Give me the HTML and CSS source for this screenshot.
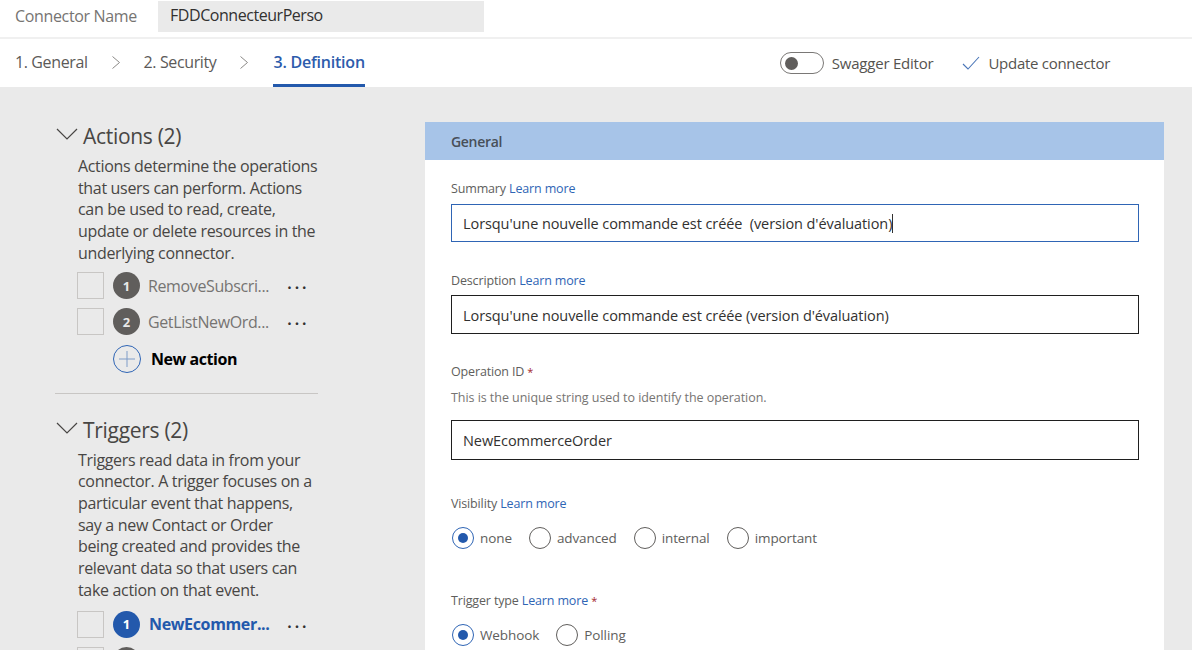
FILE: index.html
```html
<!DOCTYPE html>
<html lang="en">
<head>
  <meta charset="UTF-8" />
  <title>FDDConnecteurPerso</title>
  <link rel="stylesheet" href="styles.css">
</head>
<body>
  <div class="name-row">
    <span class="name-label">Connector Name</span>
    <div class="name-value">FDDConnecteurPerso</div>
  </div>

  <div class="tabs-row">
    <nav class="tabs">
      <span class="tab">1. General</span>
      <svg class="tab-chevron" viewBox="0 0 8 13"><path d="M.5.5l7 6-7 6" /></svg>
      <span class="tab">2. Security</span>
      <svg class="tab-chevron" viewBox="0 0 8 13"><path d="M.5.5l7 6-7 6" /></svg>
      <span class="tab tab-active">3. Definition</span>
    </nav>
    <div class="commands">
      <span class="toggle"><span class="toggle-dot"></span></span>
      <span class="command-text swagger">Swagger Editor</span>
      <svg class="check" viewBox="0 0 18 14"><path d="M1 8l5 5L17 1" /></svg>
      <span class="command-text">Update connector</span>
    </div>
  </div>

  <main class="main">
    <aside class="side">
      <section class="side-section">
        <h2 class="side-title">
          <svg class="side-chevron" viewBox="0 0 22 12"><path d="M1 1l10 10L21 1" /></svg>
          Actions (2)
        </h2>
        <p class="side-text">Actions determine the operations that users can perform. Actions can be used to read, create, update or delete resources in the underlying connector.</p>
        <div class="op">
          <span class="op-check"></span>
          <span class="op-num">1</span>
          <span class="op-name">RemoveSubscri...</span>
          <span class="op-more">···</span>
        </div>
        <div class="op">
          <span class="op-check"></span>
          <span class="op-num">2</span>
          <span class="op-name">GetListNewOrd...</span>
          <span class="op-more">···</span>
        </div>
        <div class="op-new">
          <svg class="plus" viewBox="0 0 28 28"><circle cx="14" cy="14" r="13.5" /><path class="plus-bar" d="M14 6v16M6 14h16" /></svg>
          <span>New action</span>
        </div>
      </section>

      <section class="side-section side-triggers">
        <h2 class="side-title">
          <svg class="side-chevron" viewBox="0 0 22 12"><path d="M1 1l10 10L21 1" /></svg>
          Triggers (2)
        </h2>
        <p class="side-text">Triggers read data in from your connector. A trigger focuses on a particular event that happens, say a new Contact or Order being created and provides the relevant data so that users can take action on that event.</p>
        <div class="op">
          <span class="op-check"></span>
          <span class="op-num op-num-active">1</span>
          <span class="op-name op-name-active">NewEcommer...</span>
          <span class="op-more">···</span>
        </div>
        <div class="op">
          <span class="op-check"></span>
          <span class="op-num"></span>
        </div>
      </section>
    </aside>

    <section class="panel">
      <h3 class="panel-head">General</h3>
      <div class="panel-body">
        <div class="field field-summary">
          <div class="label">Summary <a class="more">Learn more</a></div>
          <div class="input input-focus">Lorsqu'une nouvelle commande est créée&nbsp; (version d'évaluation)<span class="caret"></span></div>
        </div>
        <div class="field field-desc">
          <div class="label">Description <a class="more">Learn more</a></div>
          <div class="input">Lorsqu'une nouvelle commande est créée (version d'évaluation)</div>
        </div>
        <div class="field field-opid">
          <div class="label">Operation ID <span class="req">*</span></div>
          <div class="hint">This is the unique string used to identify the operation.</div>
          <div class="input">NewEcommerceOrder</div>
        </div>
        <div class="field field-vis">
          <div class="label">Visibility <a class="more">Learn more</a></div>
          <div class="radios">
            <span class="radio radio-on"></span><span class="radio-text">none</span>
            <span class="radio"></span><span class="radio-text">advanced</span>
            <span class="radio"></span><span class="radio-text">internal</span>
            <span class="radio"></span><span class="radio-text">important</span>
          </div>
        </div>
        <div class="field field-type">
          <div class="label">Trigger type <a class="more">Learn more</a> <span class="req">*</span></div>
          <div class="radios">
            <span class="radio radio-on"></span><span class="radio-text">Webhook</span>
            <span class="radio"></span><span class="radio-text">Polling</span>
          </div>
        </div>
      </div>
    </section>
  </main>
</body>
</html>
```

FILE: styles.css
```css
* {
  box-sizing: border-box;
}
html, body {
  height: 650px;
  overflow: hidden;
}
body {
  margin: 0;
  font-family: "Open Sans", "Noto Sans", sans-serif;
  color: #323130;
  background: #fff;
}

.name-row {
  display: flex;
  align-items: center;
  height: 39px;
  padding: 1px 0 6px 15px;
  border-bottom: 2px solid #f0f0f0;
}
.name-label {
  width: 143px;
  font-size: 16px;
  letter-spacing: -0.35px;
  color: #767472;
}
.name-value {
  width: 326px;
  height: 31px;
  padding-left: 12px;
  background: #eaeaea;
  font-size: 16px;
  letter-spacing: -0.45px;
  line-height: 29px;
}

.tabs-row {
  display: flex;
  justify-content: space-between;
  height: 48px;
  padding: 0 82px 0 15px;
}
.tabs {
  display: flex;
  align-items: stretch;
}
.tab {
  padding-top: 12px;
  font-size: 16px;
  letter-spacing: -0.38px;
  color: #5c5a58;
}
.tab-active {
  margin-left: 1px;
  border-bottom: 3px solid #2359ac;
  font-weight: 600;
  letter-spacing: -0.22px;
  color: #2d5cac;
}
.tab-chevron {
  width: 8px;
  height: 13px;
  margin: 17px 24px 0 24px;
  fill: none;
  stroke: #8a8886;
  stroke-width: 1;
}
.commands {
  display: flex;
  align-items: center;
}
.toggle {
  display: flex;
  align-items: center;
  width: 44px;
  height: 22px;
  padding-left: 4px;
  border: 1px solid #7a7876;
  border-radius: 11px;
}
.toggle-dot {
  width: 13px;
  height: 13px;
  border-radius: 50%;
  background: #605e5c;
}
.command-text {
  font-size: 15px;
  letter-spacing: -0.28px;
  color: #55534f;
}
.swagger {
  margin: 0 29px 0 8px;
  letter-spacing: -0.22px;
}
.check {
  width: 18px;
  height: 14px;
  margin-right: 8px;
  fill: none;
  stroke: #4a76b8;
  stroke-width: 1.1;
}

.main {
  display: flex;
  height: 563px;
  padding: 35px 28px 0 55px;
  overflow: hidden;
  background: #eaeaea;
}
.side {
  flex: none;
  width: 263px;
}
.side-section {
  padding-bottom: 16px;
  border-bottom: 1px solid #c8c6c4;
}
.side-triggers {
  padding-top: 22px;
  border-bottom: 0;
}
.side-title {
  display: flex;
  align-items: center;
  height: 28px;
  margin: 0 0 6px;
  font-size: 21px;
  font-weight: 400;
  letter-spacing: -0.3px;
  color: #484644;
}
.side-chevron {
  width: 22px;
  height: 12px;
  margin: 0 5px 4px 1px;
  fill: none;
  stroke: #484644;
  stroke-width: 1.2;
}
.side-text {
  margin: 0 -1px 0 23px;
  font-size: 16px;
  line-height: 21.7px;
  letter-spacing: -0.33px;
  color: #484644;
}
.side-triggers .side-text {
  margin-right: 2px;
}
.op {
  display: flex;
  align-items: center;
  height: 36px;
  margin-left: 22px;
}
.side-text + .op {
  margin-top: 3px;
}
.side-triggers .side-text + .op {
  margin-top: 5px;
}
.op-check {
  width: 27px;
  height: 27px;
  margin-right: 9px;
  border: 1px solid #c8c6c4;
}
.op-num {
  display: flex;
  align-items: center;
  justify-content: center;
  flex: none;
  width: 27px;
  height: 27px;
  margin-right: 8px;
  border-radius: 50%;
  background: #605e5c;
  font-size: 13px;
  font-weight: 700;
  color: #e8e8e8;
}
.op-num-active {
  background: #2359ac;
  color: #fff;
}
.op-name {
  width: 139px;
  font-size: 16px;
  letter-spacing: -0.38px;
  white-space: nowrap;
  color: #767472;
}
.op-name-active {
  margin-left: 1px;
  margin-right: -1px;
  font-weight: 700;
  letter-spacing: -0.35px;
  color: #2359ac;
}
.op-more {
  padding-top: 3px;
  font-size: 18px;
  font-weight: 600;
  line-height: 1;
  letter-spacing: 2.5px;
  color: #323130;
}
.op-new {
  display: flex;
  align-items: center;
  gap: 10px;
  height: 36px;
  margin-top: 1px;
  margin-left: 58px;
  font-size: 16px;
  font-weight: 700;
  letter-spacing: -0.45px;
  color: #000;
}
.plus {
  width: 28px;
  height: 28px;
  fill: none;
  stroke: #2f65b5;
  stroke-width: 1;
}
.plus-bar {
  stroke: #7f9cc8;
}

.panel {
  flex: none;
  width: 739px;
  margin-left: 107px;
}
.panel-head {
  height: 38px;
  margin: 0;
  padding-left: 26px;
  background: #a7c4e8;
  font-size: 14px;
  font-weight: 600;
  line-height: 39px;
  letter-spacing: -0.3px;
  color: #484f58;
}
.panel-body {
  height: 500px;
  padding: 0 25px 0 26px;
  background: #fff;
}
.field {
  display: flex;
  flex-direction: column;
}
.field-summary {
  padding-top: 20px;
}
.field-summary .input {
  height: 38px;
}
.field-desc {
  padding-top: 30px;
}
.field-desc .input {
  margin-top: 6px;
  padding-top: 1px;
}
.field-opid {
  padding-top: 29px;
}
.field-opid .input {
  height: 40px;
  padding-top: 1px;
}
.field-vis {
  padding-top: 35px;
}
.field-type {
  padding-top: 42px;
}
.label {
  height: 17px;
  font-size: 12.5px;
  line-height: 17px;
  letter-spacing: -0.15px;
  color: #605e5c;
}
.more {
  color: #2f65b5;
}
.req {
  font-size: 11px;
  color: #a4262c;
}
.hint {
  height: 17px;
  margin-top: 9px;
  font-size: 12.5px;
  line-height: 17px;
  letter-spacing: -0.05px;
  color: #767472;
}
.input {
  display: flex;
  align-items: center;
  height: 39px;
  margin-top: 7px;
  padding-left: 11px;
  border: 1px solid #1f1f1f;
  font-size: 14.5px;
  letter-spacing: -0.08px;
  white-space: pre;
  color: #323130;
}
.hint + .input {
  margin-top: 14px;
}
.input-focus {
  border-color: #2f65b5;
}
.caret {
  width: 1px;
  height: 19px;
  background: #323130;
}
.radios {
  display: flex;
  align-items: center;
  height: 24px;
  margin-top: 14px;
  margin-left: 1px;
}
.radio {
  flex: none;
  display: flex;
  align-items: center;
  justify-content: center;
  width: 22px;
  height: 22px;
  margin-right: 6px;
  border: 1px solid #605e5c;
  border-radius: 50%;
}
.radio-on {
  border-color: #2f65b5;
}
.radio-on::before {
  content: "";
  width: 10px;
  height: 10px;
  border-radius: 50%;
  background: #2359ac;
}
.radio-text {
  margin-right: 17px;
  font-size: 13.5px;
  letter-spacing: -0.1px;
  color: #605e5c;
}
```
